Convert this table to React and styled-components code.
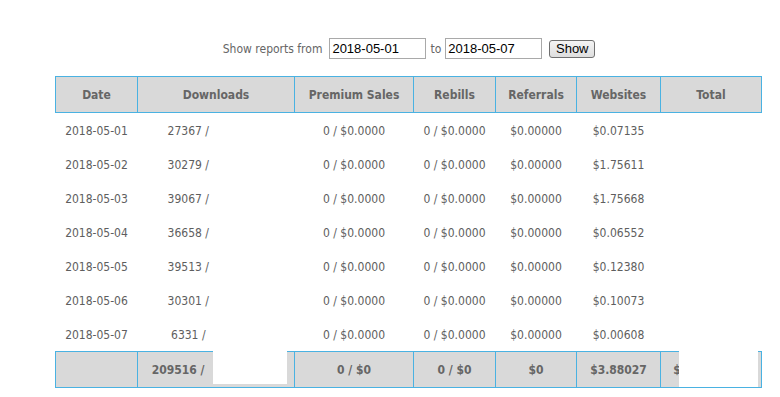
import React from 'react';
import styled, { createGlobalStyle } from 'styled-components';

const GlobalStyle = createGlobalStyle`
  body {
    margin: 0;
    background: #fff;
    font-family: 'DejaVu Sans Condensed', 'DejaVu Sans', sans-serif;
  }
`;

const Page = styled.div`
  width: 706px;
  padding: 38px 0 0 55px;
`;

const FilterForm = styled.form`
  display: flex;
  justify-content: center;
  align-items: center;
  height: 21px;
  margin: 0 0 17px 2px;
  font-size: 12px;
  color: #666;
`;

const Label = styled.span`
  margin: 0 ${p => p.$gap || 4}px 0 0;
`;

const DateInput = styled.input`
  box-sizing: border-box;
  width: 97px;
  height: 21px;
  margin: 0 4px 0 0;
  padding: 1px 2px;
  border: 1px solid #a9a9a9;
  font-family: 'Liberation Sans', Arial, sans-serif;
  font-size: 13px;
  color: #000;
`;

const ShowButton = styled.button`
  box-sizing: border-box;
  width: 46px;
  height: 18px;
  margin-left: 3px;
  padding: 0;
  border: 1px solid #707070;
  border-radius: 3px;
  background: linear-gradient(#f4f4f4, #dedede);
  font-family: 'Liberation Sans', Arial, sans-serif;
  font-size: 13px;
  color: #000;
`;

const Table = styled.table`
  width: 706px;
  table-layout: fixed;
  border-collapse: collapse;
  font-size: 12px;
  color: #5e5e5e;
`;

const HeadCell = styled.th`
  height: 35px;
  padding: 0;
  background: #d9d9d9;
  border: 1px solid #4ab2e2;
  font-weight: bold;
  text-align: center;
  color: #666;
`;

const Cell = styled.td`
  height: 32px;
  padding: 2px 0 0;
  text-align: center;
  white-space: nowrap;
`;

const FootCell = styled.td`
  position: relative;
  height: 35px;
  padding: 0;
  background: #d9d9d9;
  border: 1px solid #4ab2e2;
  font-weight: bold;
  text-align: center;
  white-space: nowrap;
  color: #666;
`;

const Hidden = styled.span`
  display: inline-block;
  width: ${p => p.$w}px;
`;

const Redact = styled.span`
  position: absolute;
  top: -1px;
  left: ${p => p.$left}px;
  width: ${p => p.$w}px;
  height: ${p => p.$h}px;
  background: #fff;
`;

const widths = [82, 157, 119, 82, 81, 84, 101];
const headers = ['Date', 'Downloads', 'Premium Sales', 'Rebills', 'Referrals', 'Websites', 'Total'];

const rows = [
  ['2018-05-01', '27367', '$0.07135'],
  ['2018-05-02', '30279', '$1.75611'],
  ['2018-05-03', '39067', '$1.75668'],
  ['2018-05-04', '36658', '$0.06552'],
  ['2018-05-05', '39513', '$0.12380'],
  ['2018-05-06', '30301', '$0.10073'],
  ['2018-05-07', '6331', '$0.00608'],
];

export default function App() {
  return (
    <Page>
      <GlobalStyle />
      <FilterForm onSubmit={e => e.preventDefault()}>
        <Label $gap={7}>Show reports from</Label>
        <DateInput defaultValue="2018-05-01" />
        <Label>to</Label>
        <DateInput defaultValue="2018-05-07" />
        <ShowButton type="submit">Show</ShowButton>
      </FilterForm>
      <Table>
        <colgroup>
          {widths.map((w, i) => <col key={i} style={{ width: w }} />)}
        </colgroup>
        <thead>
          <tr>
            {headers.map(h => <HeadCell key={h}>{h}</HeadCell>)}
          </tr>
        </thead>
        <tbody>
          {rows.map(([date, dl, web]) => (
            <tr key={date}>
              <Cell>{date}</Cell>
              <Cell>{dl} / <Hidden $w={52} /></Cell>
              <Cell>0 / $0.0000</Cell>
              <Cell>0 / $0.0000</Cell>
              <Cell>$0.00000</Cell>
              <Cell>{web}</Cell>
              <Cell />
            </tr>
          ))}
        </tbody>
        <tfoot>
          <tr>
            <FootCell />
            <FootCell>209516 / <Hidden $w={72} /><Redact $left={75} $w={74} $h={33} /></FootCell>
            <FootCell>0 / $0</FootCell>
            <FootCell>0 / $0</FootCell>
            <FootCell>$0</FootCell>
            <FootCell>$3.88027</FootCell>
            <FootCell>$<Hidden $w={68} /><Redact $left={18} $w={79} $h={36} /></FootCell>
          </tr>
        </tfoot>
      </Table>
    </Page>
  );
}
